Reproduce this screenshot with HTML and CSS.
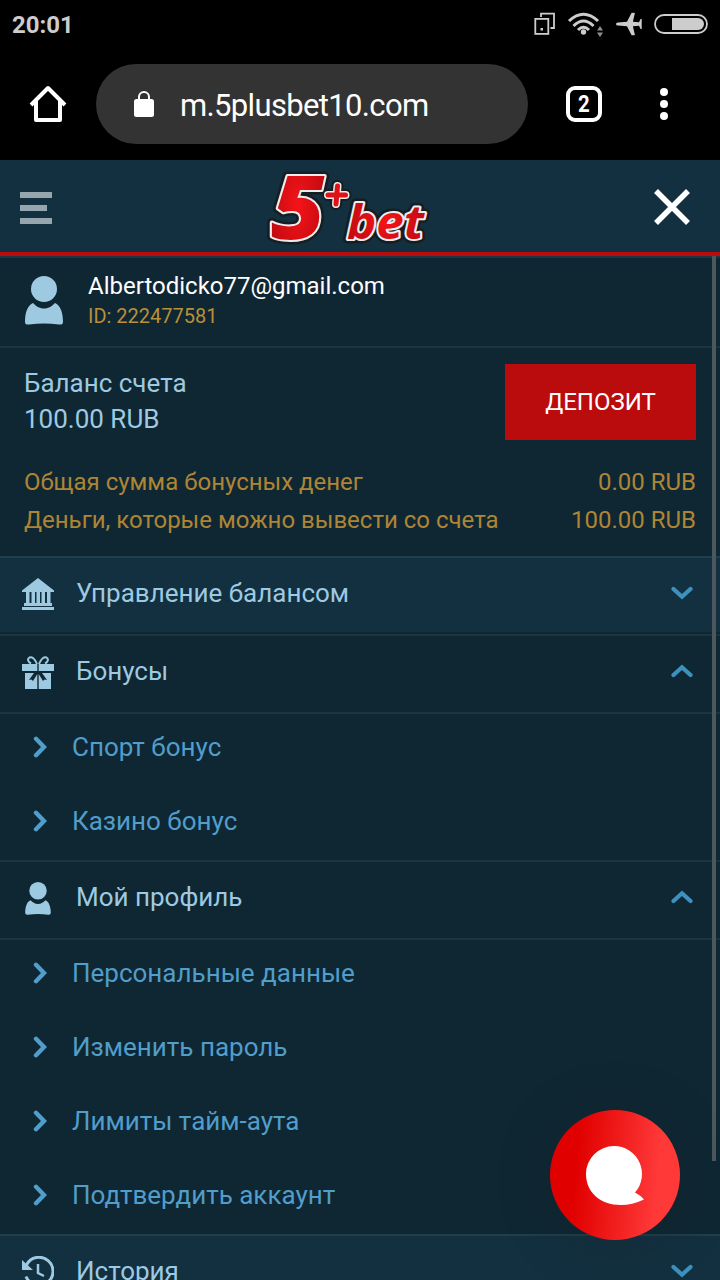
FILE: index.html
```
<!DOCTYPE html>
<html lang="ru">
<head>
    <meta charset="UTF-8">
    <meta name="viewport" content="width=device-width, initial-scale=1.0">
    <title>5plusbet</title>
    <link rel="stylesheet" href="styles.css">
</head>
<body>
    <svg width="0" height="0" class="defs">
        <symbol id="person" viewBox="0 0 38 49">
            <ellipse cx="19" cy="13" rx="13" ry="13"/>
            <path d="M8 27 C11 30 14 32.500 19 32.500 S27 30 30 27 C35 29 38 36 38 46 Q38 49 34 48.500 Q19 46.500 4 48.500 Q0 49 0 46 C0 36 3 29 8 27Z"/>
        </symbol>
        <symbol id="right" viewBox="0 0 14 22">
            <path d="M3 2.800 L11 11 L3 19.200" fill="none" stroke="currentColor" stroke-width="4.400" stroke-linecap="round"/>
        </symbol>
        <symbol id="down" viewBox="0 0 22 14">
            <path d="M2.500 3 L11 10.700 L19.500 3" fill="none" stroke="currentColor" stroke-width="4.200" stroke-linecap="round"/>
        </symbol>
    </svg>

    <div class="status-bar">
        <span class="clock">20:01</span>
        <svg width="180" height="32" viewBox="530 8 180 32" fill="#cdcdcd">
            <g fill="none" stroke="#cdcdcd" stroke-width="1.800">
                <rect x="535.300" y="18.900" width="13" height="15"/>
                <path d="M541 17 V13.700 H554 V28 H550.500"/>
            </g>
            <rect x="540.500" y="28" width="2.500" height="2.500"/>
            <g fill="none" stroke="#cdcdcd" stroke-width="3">
                <path d="M569 21 Q583.500 7.500 598 21"/>
                <path d="M573.500 26 Q583.500 16 593.500 26"/>
                <path d="M578 30 Q583.500 24.500 589 30"/>
            </g>
            <circle cx="583.500" cy="32" r="2.700"/>
            <path d="M597 30.500 L600 26 L603 30.500Z M597 32.500 H603 L600 37Z" fill="#909090"/>
            <path d="M616 24 Q616 22.500 618 22.500 L627 21.700 L631.500 13 Q633 12.300 634.900 13 L632.900 21.800 L639 22.300 L640.500 19 H641.700 V29 H640.500 L639 25.700 L632.900 26.200 L634.900 35 Q633 35.700 631.500 35 L627 26.300 L618 25.500 Q616 25.500 616 24Z"/>
            <rect x="655" y="15" width="52" height="18" rx="9" fill="none" stroke="#cdcdcd" stroke-width="1.800"/>
            <path d="M672 18 H698 A6 6 0 0 1 698 30 H672Z"/>
        </svg>
    </div>

    <div class="browser-bar">
        <svg class="home" width="40" height="40" viewBox="28 84 40 40" fill="none" stroke="#fff" stroke-width="4" stroke-linejoin="round">
            <path d="M31 105 L48 88 L65 105"/>
            <path d="M36 101 V120 H60 V101"/>
        </svg>
        <div class="address">
            <svg width="20" height="28" viewBox="0 0 20 28">
                <rect y="9" width="20" height="18" rx="2.500" fill="#fff"/>
                <path d="M5 10 V7 A5 5 0 0 1 15 7 V10" fill="none" stroke="#fff" stroke-width="2"/>
            </svg>
            <span>m.5plusbet10.com</span>
        </div>
        <div class="tabs"><span>2</span></div>
        <div class="dots"><i></i><i></i><i></i></div>
    </div>

    <header>
        <div class="burger"><i></i><i></i><i></i></div>
        <svg class="logo" width="164" height="84" viewBox="266 166 164 84">
            <defs>
                <radialGradient id="red">
                    <stop offset="0" stop-color="#f41418"/>
                    <stop offset="1" stop-color="#c50b12"/>
                </radialGradient>
            </defs>
            <g class="logo-black">
                <text class="five" x="271" y="241" textLength="54" lengthAdjust="spacingAndGlyphs">5</text>
                <path d="M337.500 188 L336 206 M328 197 H345.500"/>
                <text class="bet" x="347" y="241" textLength="77" lengthAdjust="spacingAndGlyphs">bet</text>
            </g>
            <g class="logo-white" aria-hidden="true">
                <text class="five" x="271" y="241" textLength="54" lengthAdjust="spacingAndGlyphs">5</text>
                <path class="plus-edge" d="M337.500 188 L336 206 M328 197 H345.500"/>
                <path d="M337.500 188 L336 206 M328 197 H345.500"/>
                <text class="bet" x="347" y="241" textLength="77" lengthAdjust="spacingAndGlyphs">bet</text>
            </g>
        </svg>
        <svg class="close" width="40" height="40" viewBox="0 0 40 40" stroke="#fff" stroke-width="5.500">
            <path d="M4 4 L36 36 M36 4 L4 36"/>
        </svg>
    </header>

    <main>
        <section class="user">
            <svg width="38" height="49"><use href="#person"/></svg>
            <div>
                <div class="email">Albertodicko77@gmail.com</div>
                <div class="user-id">ID: 222477581</div>
            </div>
        </section>

        <section class="balance">
            <div class="account">
                <div class="total">Баланс счета<br>100.00 RUB</div>
                <button>ДЕПОЗИТ</button>
            </div>
            <div class="money"><span>Общая сумма бонусных денег</span><span>0.00 RUB</span></div>
            <div class="money"><span>Деньги, которые можно вывести со счета</span><span>100.00 RUB</span></div>
        </section>

        <nav>
            <div class="row closed">
                <svg class="icon" width="32" height="32" viewBox="0 0 32 32">
                    <path d="M16 0 L32 12.500 V14 H0 V12.500Z M4 14 H7.500 V25 H4Z M9.500 14 H13 V25 H9.500Z M14.500 14 H18 V25 H14.500Z M19.500 14 H23 V25 H19.500Z M25 14 H28.500 V25 H25Z M2 25 H30 V28 H2Z M0 29 H32 V32 H0Z"/>
                </svg>
                <span>Управление балансом</span>
                <svg class="arrow" width="22" height="14"><use href="#down"/></svg>
            </div>
            <div class="row">
                <svg class="icon" width="32" height="33" viewBox="0 0 32 33">
                    <path d="M0 8 H15.300 V15 H0Z M16.700 8 H32 V15 H16.700Z M3 17 H12 L7 24 L9.500 23.500 L11 25 L15.300 18 V33 H3Z M29 17 H20 L25 24 L22.500 23.500 L21 25 L16.700 18 V33 H29Z"/>
                    <path d="M15 8 C13 3 10 0.500 7.500 1.500 C5 3 6 6 9 7.500 M17 8 C19 3 22 0.500 24.500 1.500 C27 3 26 6 23 7.500" fill="none" stroke="currentColor" stroke-width="2"/>
                </svg>
                <span>Бонусы</span>
                <svg class="arrow up" width="22" height="14"><use href="#down"/></svg>
            </div>
            <ul>
                <li><svg width="14" height="22"><use href="#right"/></svg>Спорт бонус</li>
                <li><svg width="14" height="22"><use href="#right"/></svg>Казино бонус</li>
            </ul>
            <div class="row">
                <svg class="icon" width="32" height="33"><use href="#person"/></svg>
                <span>Мой профиль</span>
                <svg class="arrow up" width="22" height="14"><use href="#down"/></svg>
            </div>
            <ul>
                <li><svg width="14" height="22"><use href="#right"/></svg>Персональные данные</li>
                <li><svg width="14" height="22"><use href="#right"/></svg>Изменить пароль</li>
                <li><svg width="14" height="22"><use href="#right"/></svg>Лимиты тайм-аута</li>
                <li><svg width="14" height="22"><use href="#right"/></svg>Подтвердить аккаунт</li>
            </ul>
            <div class="row closed">
                <svg class="icon" width="32" height="32" viewBox="0 0 32 32">
                    <path d="M4.500 9 A14 14 0 1 1 4 20.500" fill="none" stroke="currentColor" stroke-width="3"/>
                    <path d="M0 4 L11 14 H0Z"/>
                    <path d="M16 8 V17 L22 20" fill="none" stroke="currentColor" stroke-width="2.500"/>
                </svg>
                <span>История</span>
                <svg class="arrow" width="22" height="14"><use href="#down"/></svg>
            </div>
        </nav>
    </main>

    <div class="scrollbar"></div>
    <div class="chat">
        <svg width="130" height="130" viewBox="0 0 130 130">
            <path d="M64 36 A28 28 0 0 1 85 82.500 Q90 85 94 89.500 Q82 95 71 95 C50 95 36 82 36 64 A28 28 0 0 1 64 36Z" fill="#fff"/>
        </svg>
    </div>
</body>
</html>
```
FILE: styles.css
```
* {
    box-sizing: border-box;
}
body {
    margin: 0;
    width: 720px;
    height: 1280px;
    overflow: hidden;
    position: relative;
    font-family: Roboto, sans-serif;
    background-color: #0f2733;
    color: #9ecae1;
}
svg {
    display: block;
    flex-shrink: 0;
}
.defs {
    position: absolute;
}
.status-bar {
    height: 48px;
    padding: 0 10px 0 12px;
    background: #000;
    display: flex;
    align-items: center;
    justify-content: space-between;
}
.clock {
    color: #cdcdcd;
    font-size: 24px;
    font-weight: bold;
    line-height: 48px;
    padding-top: 2px;
}
.browser-bar {
    height: 112px;
    background: #000;
    display: flex;
    align-items: center;
    padding-left: 28px;
}
.address {
    width: 432px;
    height: 80px;
    margin-left: 28px;
    padding-left: 38px;
    border-radius: 40px;
    background: #333;
    color: #fff;
    font-size: 31px;
    letter-spacing: -0.65px;
    display: flex;
    align-items: center;
}
.address span {
    margin-left: 26px;
    padding-top: 2px;
}
.tabs {
    width: 36px;
    height: 36px;
    margin-left: 38px;
    border: 4px solid #fff;
    border-radius: 9px;
    color: #fff;
    font-size: 24px;
    font-weight: bold;
    line-height: 29px;
    text-align: center;
}
.tabs span {
    display: inline-block;
    transform: scaleX(0.85);
}
.dots {
    display: grid;
    gap: 4px;
    margin-left: 58px;
}
.dots i {
    width: 8px;
    height: 8px;
    border-radius: 50%;
    background: #fff;
}
header {
    height: 96px;
    padding: 0 28px 0 20px;
    border-bottom: 4px solid #ba0b0d;
    background: #133040;
    display: flex;
    align-items: center;
    justify-content: space-between;
}
.burger {
    width: 32px;
    display: grid;
    gap: 7px;
    padding-top: 4px;
}
.burger i {
    height: 6px;
    background: #96a6af;
}
.burger i:nth-child(2) {
    width: 27px;
}
.logo {
    margin-left: -8px;
    overflow: visible;
}
.logo text {
    font-family: "Open Sans", sans-serif;
    font-style: italic;
    font-weight: 800;
}
.logo .five {
    font-size: 88px;
}
.logo .bet {
    font-size: 46px;
    font-weight: 700;
}
.logo-black {
    fill: #171d20;
    stroke: #171d20;
    stroke-width: 9px;
    stroke-linejoin: round;
    stroke-linecap: round;
}
.logo-black path {
    stroke-width: 12px;
}
.logo-white text {
    fill: url(#red);
    stroke: #eee;
    stroke-width: 4px;
    stroke-linejoin: round;
    paint-order: stroke;
}
.logo-white path {
    stroke: #e01117;
    stroke-width: 5px;
    stroke-linecap: round;
}
.logo-white .plus-edge {
    stroke: #eee;
    stroke-width: 8px;
}
.close {
    margin-top: 1px;
}
.user {
    height: 92px;
    padding: 4px 25px 0;
    border-top: 2px solid #1c3743;
    border-bottom: 2px solid #1c3440;
    display: flex;
    align-items: center;
    gap: 25px;
}
.user svg, .icon {
    fill: #9ecae1;
}
.user svg {
    margin-top: -7px;
}
.user > div {
    margin-top: -9px;
}
.email {
    color: #fff;
    font-size: 24px;
    line-height: 32px;
}
.user-id {
    color: #b98f39;
    font-size: 20px;
    line-height: 28px;
}
.balance {
    height: 208px;
    padding: 16px 24px 0;
}
.account {
    height: 76px;
    margin-bottom: 23px;
    display: flex;
    align-items: center;
    justify-content: space-between;
    font-size: 26px;
    line-height: 36px;
}
.total {
    padding-bottom: 2px;
}
.account button {
    width: 191px;
    height: 76px;
    border: 0;
    background: #ba0b0d;
    color: #fff;
    font-family: Roboto, sans-serif;
    font-size: 24px;
}
.money {
    display: flex;
    justify-content: space-between;
    color: #ad8535;
    font-size: 24px;
    line-height: 38px;
}
.row {
    height: 78px;
    padding: 0 27px 6px 22px;
    border-top: 2px solid #1c3440;
    display: flex;
    align-items: center;
    font-size: 26px;
}
.row.closed {
    border-top-color: #203e4b;
    background: linear-gradient(#133040 74px, #0f2733 74px);
}
.row span {
    margin-left: 22px;
}
.icon {
    margin-top: 2px;
}
.arrow {
    margin-left: auto;
    color: #3d91bf;
}
.up {
    transform: rotate(180deg);
}
ul {
    list-style: none;
    margin: 0;
    padding: 0;
    box-shadow: inset 0 2px #1c3440;
}
li {
    height: 74px;
    padding: 0 33px 4px;
    display: flex;
    align-items: center;
    gap: 25px;
    color: #519dcb;
    font-size: 26px;
}
.scrollbar {
    position: absolute;
    top: 256px;
    right: 4px;
    width: 4px;
    height: 905px;
    background: #4d575e;
}
.chat {
    position: absolute;
    left: 550px;
    top: 1110px;
    width: 130px;
    height: 130px;
    border-radius: 50%;
    background: linear-gradient(95deg, #e10000 22%, #ff3838 80%);
    box-shadow: 0 4px 50px rgba(20, 35, 40, 0.35);
}
```
